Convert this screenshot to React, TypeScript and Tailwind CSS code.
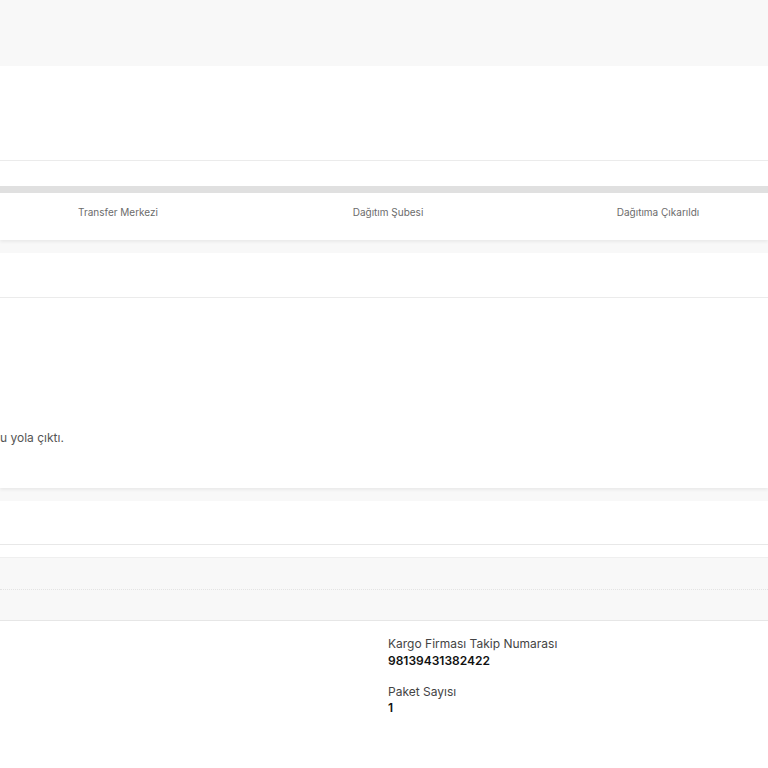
import React from "react";

export default function App() {
  const font = { fontFamily: "Inter, 'Noto Sans', sans-serif" };
  return (
    <div className="w-[768px] h-[768px] overflow-hidden bg-white" style={font}>
      <div className="h-[66px] bg-[#f8f8f8]" />
      <div className="h-[95px] bg-white border-b border-[#ebebeb]" />
      <div className="h-[25px] bg-white" />
      <div className="h-[7px] bg-[#e0e0e0]" />
      <div className="h-[47px] bg-white shadow-[0_2px_3px_rgba(0,0,0,0.06)] relative z-10 overflow-hidden">
        <div className="ml-[-17px] w-[810px] grid grid-cols-3 pt-[12px]">
          <div className="text-center text-[10px] text-[#6b6b6b]">Transfer Merkezi</div>
          <div className="text-center text-[10px] text-[#6b6b6b]">Dağıtım Şubesi</div>
          <div className="text-center text-[10px] text-[#6b6b6b]">Dağıtıma Çıkarıldı</div>
        </div>
      </div>
      <div className="h-[13px] bg-[#f8f8f8]" />
      <div className="h-[45px] bg-white border-b border-[#ebebeb]" />
      <div className="h-[190px] bg-white shadow-[0_2px_3px_rgba(0,0,0,0.06)] relative z-10 flex flex-col">
        <div className="mt-[131px] ml-0 text-[12px] text-[#555]">u yola çıktı.</div>
      </div>
      <div className="h-[13px] bg-[#f8f8f8]" />
      <div className="h-[44px] bg-white border-b border-[#e8e8e8]" />
      <div className="h-[13px] bg-white border-b border-[#efefef]" />
      <div className="h-[63px] bg-[#f8f8f8] border-b border-[#e6e6e6] flex flex-col">
        <div className="h-[31px]" />
        <div className="border-t border-dotted border-[#e3e3e3]" />
      </div>
      <div className="flex">
        <div className="w-[388px]" />
        <div className="pt-[15px] flex flex-col">
          <div className="text-[12px] leading-[16px] text-[#444]">Kargo Firması Takip Numarası</div>
          <div className="text-[12px] leading-[16px] font-semibold text-[#111] mt-[1px]">98139431382422</div>
          <div className="text-[12px] leading-[16px] text-[#444] mt-[15px]">Paket Sayısı</div>
          <div className="text-[12px] leading-[16px] font-semibold text-[#111]">1</div>
        </div>
      </div>
    </div>
  );
}
